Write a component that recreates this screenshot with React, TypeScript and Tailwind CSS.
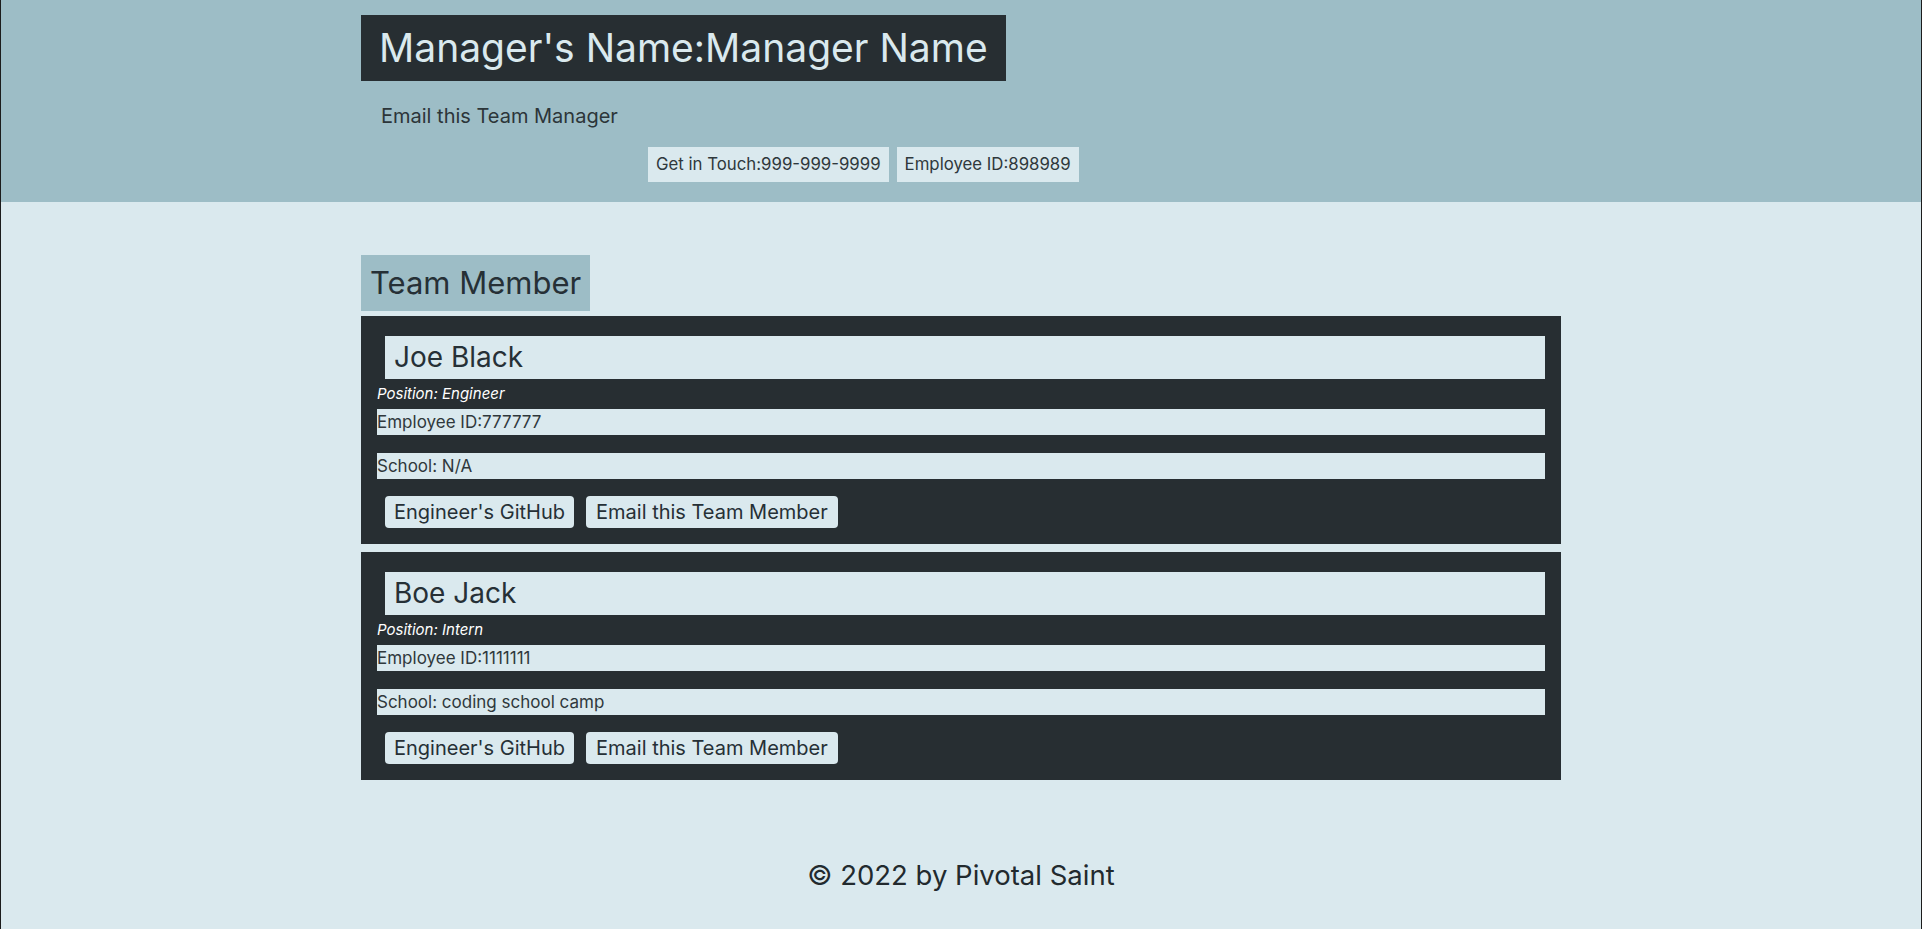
import React from "react";

const members = [
  { name: "Joe Black", position: "Engineer", id: "777777", school: "N/A" },
  { name: "Boe Jack", position: "Intern", id: "1111111", school: "coding school camp" },
];

function MemberCard({ name, position, id, school }: { name: string; position: string; id: string; school: string }) {
  return (
    <div className="bg-[#272e32] pt-5 pb-4 px-4">
      <h3 className="ml-2 h-[43px] bg-[#dae9ee] pl-[9px] text-[28px] leading-[43px] text-[#263036]">{name}</h3>
      <p className="h-[30px] pt-[4px] text-[15px] italic leading-[22px] text-white">Position: {position}</p>
      <p className="h-[26px] bg-[#dae9ee] text-[17px] leading-[26px] text-[#2f383c]">Employee ID:{id}</p>
      <p className="mt-[18px] h-[26px] bg-[#dae9ee] text-[17px] leading-[26px] text-[#2f383c]">School: {school}</p>
      <div className="mt-[17px] ml-2 flex gap-3">
        <button className="h-8 rounded bg-[#dae9ee] px-[9px] text-[20px] leading-8 text-[#263036]">Engineer's GitHub</button>
        <button className="h-8 rounded bg-[#dae9ee] px-[10px] text-[20px] leading-8 text-[#263036]">Email this Team Member</button>
      </div>
    </div>
  );
}

export default function App() {
  return (
    <div className="min-h-screen border-x border-[#1c1c1c] bg-[#dae9ee] font-['Inter','Noto_Sans',sans-serif] text-[#263036]">
      <header className="h-[202px] bg-[#9dbdc6] pt-[15px]">
        <div className="mx-auto w-[1200px]">
          <h1 className="inline-block h-[66px] bg-[#272e32] px-[18px] text-[39px] leading-[66px] text-[#dae9ee]">
            Manager's Name:Manager Name
          </h1>
          <p className="mt-[22px] pl-5 text-[20px] leading-[26px] text-[#2c3539]">Email this Team Manager</p>
          <div className="mt-[18px] ml-[287px] flex gap-2">
            <span className="h-[35px] bg-[#dae9ee] px-2 text-[16.8px] leading-[35px] text-[#2f383c]">Get in Touch:999-999-9999</span>
            <span className="h-[35px] bg-[#dae9ee] px-2 text-[16.8px] leading-[35px] text-[#2f383c]">Employee ID:898989</span>
          </div>
        </div>
      </header>

      <main className="mx-auto w-[1200px] pt-[53px]">
        <h2 className="inline-block h-[56px] bg-[#9dbdc6] px-[9px] text-[31px] leading-[56px] text-[#263036]">Team Member</h2>
        <div className="mt-[5px] flex flex-col gap-2">
          {members.map((m) => (
            <MemberCard key={m.name} {...m} />
          ))}
        </div>
      </main>

      <footer className="pt-[75px] pb-10 text-center text-[27.5px] leading-[40px] text-[#222a2e]">
        © 2022 by Pivotal Saint
      </footer>
    </div>
  );
}
